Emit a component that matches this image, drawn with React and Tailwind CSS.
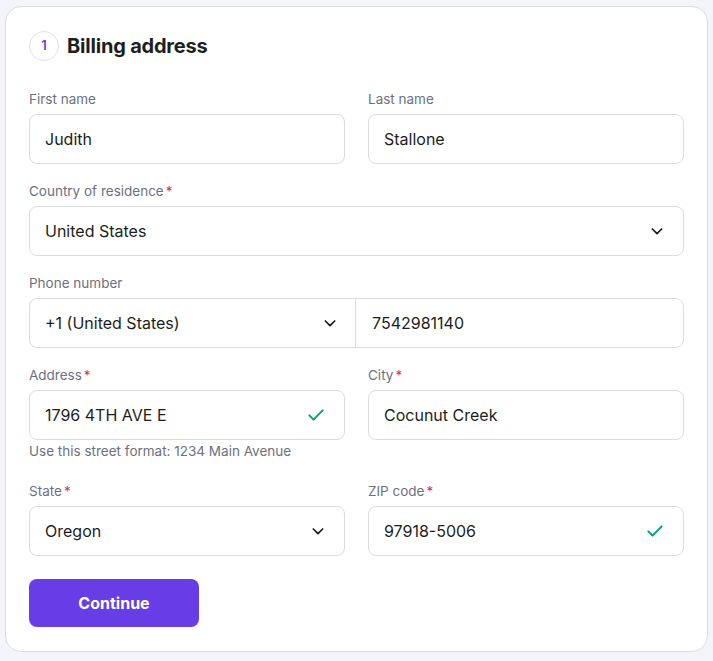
import React from "react";

const font = { fontFamily: "Inter, 'Noto Sans', sans-serif" };

function Chevron() {
  return (
    <svg width="16" height="16" viewBox="0 0 24 24" fill="none" stroke="#1d1e20" strokeWidth="2.6" strokeLinecap="round" strokeLinejoin="round">
      <path d="M5 9l7 7 7-7" />
    </svg>
  );
}

function Check() {
  return (
    <svg width="20" height="20" viewBox="0 0 24 24" fill="none" stroke="#00a37a" strokeWidth="2.4" strokeLinecap="round" strokeLinejoin="round">
      <path d="M4 12.5l5 5L20 6.5" />
    </svg>
  );
}

function Label({ children, req }) {
  return (
    <div className="h-5 mb-[5px] text-[13.5px] leading-5 text-[#6d7081]">
      {children}
      {req && <span className="text-[#d63163] ml-[2px]">*</span>}
    </div>
  );
}

function Box({ children, right }) {
  return (
    <div className="h-[50px] rounded-lg border border-[#dadce0] bg-white flex items-center pl-[15px] pr-[18px] pb-[1px] text-[16px] text-[#1d1e20]">
      <span className="flex-1">{children}</span>
      {right}
    </div>
  );
}

export default function App() {
  return (
    <div className="min-h-[661px] bg-[#f4f5fb] pt-[6px] pl-[5px]" style={font}>
      <div className="w-[703px] h-[646px] bg-white border border-[#dadce0] rounded-[16px] px-[23px] pt-[24px]">
        <div className="flex items-center gap-[8px] h-[30px]">
          <div className="w-[30px] h-[30px] rounded-full border border-[#e3dcfb] flex items-center justify-center text-[13px] font-semibold text-[#673de6]">1</div>
          <div className="text-[20px] font-bold text-[#1d1e20] tracking-[-0.2px]">Billing address</div>
        </div>

        <div className="mt-[28px] grid grid-cols-2 gap-x-[23px]">
          <div>
            <Label>First name</Label>
            <Box>Judith</Box>
          </div>
          <div>
            <Label>Last name</Label>
            <Box>Stallone</Box>
          </div>
        </div>

        <div className="mt-[17px]">
          <Label req>Country of residence</Label>
          <Box right={<Chevron />}>United States</Box>
        </div>

        <div className="mt-[17px]">
          <Label>Phone number</Label>
          <div className="h-[50px] rounded-lg border border-[#dadce0] flex text-[16px] text-[#1d1e20]">
            <div className="w-[326px] flex items-center pl-[15px] pr-[17px] pb-[1px] border-r border-[#dadce0]">
              <span className="flex-1">+1 (United States)</span>
              <Chevron />
            </div>
            <div className="flex-1 flex items-center pl-[16px] pb-[1px]">7542981140</div>
          </div>
        </div>

        <div className="mt-[17px] grid grid-cols-2 gap-x-[23px]">
          <div>
            <Label req>Address</Label>
            <Box right={<Check />}>1796 4TH AVE E</Box>
            <div className="mt-[2px] text-[13.5px] leading-[18px] text-[#6d7081]">Use this street format: 1234 Main Avenue</div>
          </div>
          <div>
            <Label req>City</Label>
            <Box>Cocunut Creek</Box>
          </div>
        </div>

        <div className="mt-[21px] grid grid-cols-2 gap-x-[23px]">
          <div>
            <Label req>State</Label>
            <Box right={<Chevron />}>Oregon</Box>
          </div>
          <div>
            <Label req>ZIP code</Label>
            <Box right={<Check />}>97918-5006</Box>
          </div>
        </div>

        <button className="mt-[23px] w-[170px] h-[48px] rounded-lg bg-[#673de6] text-white text-[16px] font-bold">Continue</button>
      </div>
    </div>
  );
}
